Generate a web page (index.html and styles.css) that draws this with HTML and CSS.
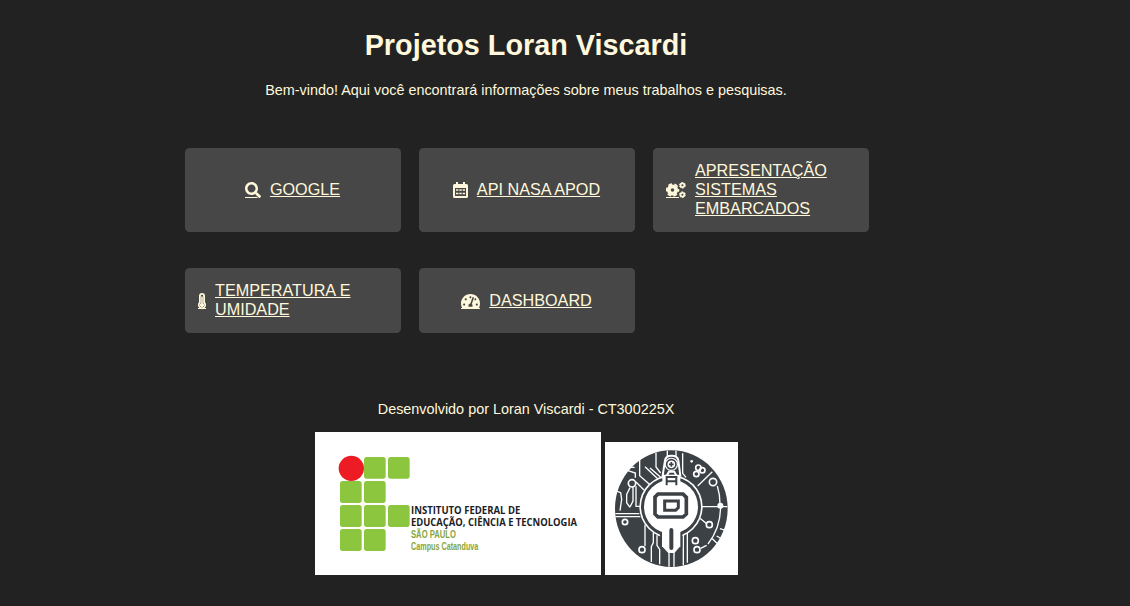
FILE: index.html
```html
<!DOCTYPE html>
<html lang="pt-BR">
<head>
<meta charset="utf-8">
<title>Projetos Loran Viscardi</title>
<link rel="stylesheet" href="styles.css">
</head>
<body>
<div class="page">
  <header class="intro">
    <h1 class="title">Projetos Loran Viscardi</h1>
    <p class="text">Bem-vindo! Aqui você encontrará informações sobre meus trabalhos e pesquisas.</p>
  </header>
  <main class="cards">
    <a class="card" href="#">
      <svg class="icon" width="16" height="17" viewBox="0 0 512 544"><path d="M505 442.7L405.3 343c-4.5-4.5-10.6-7-17-7H372c27.6-35.3 44-79.7 44-128C416 93.1 322.9 0 208 0S0 93.1 0 208s93.1 208 208 208c48.3 0 92.7-16.4 128-44v16.3c0 6.4 2.5 12.5 7 17l99.7 99.7c9.4 9.4 24.6 9.4 33.9 0l28.3-28.3c9.4-9.4 9.4-24.6.1-34zM208 336c-70.7 0-128-57.2-128-128 0-70.7 57.2-128 128-128 70.7 0 128 57.2 128 128 0 70.7-57.2 128-128 128z"/><path d="M0 480h400v32H0z"/></svg>
      <span>GOOGLE</span>
    </a>
    <a class="card" href="#">
      <svg class="icon" width="15" height="17" viewBox="0 0 15 17"><path fill-rule="evenodd" d="M3 0h2v2h5V0h2v2h1.500A1.500 1.500 0 0 1 15 3.500v11a1.500 1.500 0 0 1-1.500 1.500h-12A1.500 1.500 0 0 1 0 14.500v-11A1.500 1.500 0 0 1 1.500 2H3zM2 6v8h11V6zM3 7.300h2.400v1.500H3zM6.300 7.300h2.400v1.500H6.300zM9.600 7.300H12v1.500H9.600zM3 10.700h2.400v1.500H3zM6.300 10.700h2.400v1.500H6.300zM9.600 10.700H12v1.500H9.600z"/></svg>
      <span>API NASA APOD</span>
    </a>
    <a class="card" href="#">
      <svg class="icon" width="20" height="17" viewBox="0 0 20 17"><g fill="none" stroke="#fff8dc"><circle cx="6.500" cy="8" r="3.700" stroke-width="3.800"/><circle cx="6.500" cy="8" r="6" stroke-width="1.600" stroke-dasharray="3.800 2.483" stroke-dashoffset="1.900"/><circle cx="16.400" cy="3.300" r="1.900" stroke-width="1.700"/><circle cx="16.400" cy="3.300" r="2.900" stroke-width="1" stroke-dasharray="1.900 1.137"/><circle cx="16.400" cy="12.700" r="1.900" stroke-width="1.700"/><circle cx="16.400" cy="12.700" r="2.900" stroke-width="1" stroke-dasharray="1.900 1.137"/></g><path d="M0 15h13v1H0z"/></svg>
      <span>APRESENTAÇÃO SISTEMAS EMBARCADOS</span>
    </a>
    <a class="card" href="#">
      <svg class="icon" width="8" height="17" viewBox="0 0 8 17"><path fill-rule="evenodd" d="M4 0a3 3 0 0 1 3 3v6.300a4 4 0 1 1-6 0V3a3 3 0 0 1 3-3zm0 1.800A1.200 1.200 0 0 0 2.800 3v7l-.6.600a2.300 2.300 0 1 0 3.600 0l-.6-.6V3A1.200 1.200 0 0 0 4 1.800z"/><path d="M3.200 3.500h1.600v6.800a2 2 0 1 1-1.600 0zM0 15h8v1H0z"/></svg>
      <span>TEMPERATURA E UMIDADE</span>
    </a>
    <a class="card" href="#">
      <svg class="icon" width="19" height="17" viewBox="0 0 576 515"><path d="M288 32C128.940 32 0 160.940 0 320c0 52.800 14.250 102.260 39.060 144.800 5.610 9.620 16.300 15.200 27.440 15.200h443c11.140 0 21.830-5.580 27.440-15.200C561.750 422.260 576 372.800 576 320c0-159.060-128.940-288-288-288zm0 64c14.710 0 26.580 10.130 30.320 23.650-1.110 2.260-2.640 4.230-3.450 6.670l-9.220 27.670c-5.130 3.490-10.970 6.010-17.640 6.010-17.670 0-32-14.330-32-32S270.330 96 288 96zM96 384c-17.670 0-32-14.330-32-32s14.330-32 32-32 32 14.330 32 32-14.330 32-32 32zm48-160c-17.670 0-32-14.330-32-32s14.330-32 32-32 32 14.330 32 32-14.330 32-32 32zm246.770-72.410l-61.330 184C343.130 347.330 352 364.540 352 384c0 11.720-3.380 22.550-8.880 32H232.880c-5.500-9.450-8.880-20.280-8.880-32 0-33.940 26.500-61.430 59.900-63.590l61.340-184.010c4.170-12.560 17.730-19.450 30.360-15.170 12.570 4.190 19.350 17.790 15.170 30.360zm14.660 57.200l15.520-46.550c3.470-1.290 7.130-2.230 11.050-2.230 17.670 0 32 14.330 32 32s-14.330 32-32 32c-11.380-.010-20.890-6.280-26.570-15.220zM480 384c-17.670 0-32-14.330-32-32s14.330-32 32-32 32 14.330 32 32-14.330 32-32 32z"/><path d="M0 455h576v30H0z"/></svg>
      <span>DASHBOARD</span>
    </a>
  </main>
  <footer class="footer">
    <p class="text">Desenvolvido por Loran Viscardi - CT300225X</p>
    <div class="logos">
      <svg class="logo-if" viewBox="15 21 858 429" width="286" height="143">
        <path fill="#fff" d="M15 21h858v429H15z"/>
        <g fill="#8cc63f">
          <rect x="162" y="96" width="65" height="65" rx="8"/><rect x="234" y="96" width="65" height="65" rx="8"/>
          <rect x="90" y="168" width="65" height="66" rx="8"/><rect x="162" y="168" width="65" height="66" rx="8"/>
          <rect x="90" y="240" width="65" height="66" rx="8"/><rect x="162" y="240" width="65" height="66" rx="8"/><rect x="234" y="240" width="65" height="66" rx="8"/>
          <rect x="90" y="312" width="65" height="66" rx="8"/><rect x="162" y="312" width="65" height="66" rx="8"/>
        </g>
        <circle cx="124" cy="130" r="38" fill="#ed1c24"/>
        <g class="logo-words">
          <text x="303" y="266" font-size="31" textLength="328" lengthAdjust="spacingAndGlyphs">INSTITUTO FEDERAL DE</text>
          <text x="303" y="303" font-size="31" textLength="498" lengthAdjust="spacingAndGlyphs">EDUCAÇÃO, CIÊNCIA E TECNOLOGIA</text>
          <text class="green" x="303" y="340" font-size="34" textLength="135" lengthAdjust="spacingAndGlyphs">SÃO PAULO</text>
          <text class="green" x="303" y="375" font-size="31" textLength="202" lengthAdjust="spacingAndGlyphs">Campus Catanduva</text>
        </g>
      </svg>
      <svg class="logo-pcb" viewBox="15 18 399 399" width="133" height="133">
        <path fill="#fff" d="M15 18h399v399H15z"/>
        <ellipse cx="214" cy="218" rx="169" ry="175" fill="#3c4146"/>
        <g fill="none" stroke="#fff" stroke-width="4">
          <path d="M84 104l22 7v14M119 69v50l49 43M135 92l38 36M150 96l32 28M168 50v43l14 18M202 44v20M228 44v20M248 52v60l10 12M99 153v42l-9 18M108 138l24 24M108 151v60h14M90 155l-10 20v25l10 14M46 164l16 6 3 20-5 34M46 233h72M46 242h75M135 266v64M160 290v30l-6 12v46M171 298v30l8 12v45M207 340v52M222 340v52M250 296v92M262 290v90M293 150l44-43M306 212h76M300 247l20 16M352 150q8 25 8 55M362 212q-1 65-38 112M302 337l18-9M360 278l16 5M350 300l16 9M337 308l14 14"/>
          <path d="M70 94h34M78 84l18 3"/>
        </g>
        <g fill="none" stroke="#fff" stroke-width="5">
          <circle cx="96" cy="142" r="11"/><circle cx="75" cy="258" r="8"/><circle cx="126" cy="341" r="9"/><circle cx="339" cy="138" r="11"/><circle cx="328" cy="266" r="9"/><circle cx="286" cy="314" r="9"/><circle cx="291" cy="341" r="9"/><circle cx="295" cy="95" r="8"/><circle cx="307" cy="103" r="8"/><circle cx="289" cy="114" r="8"/>
        </g>
        <circle cx="361" cy="209" r="9" fill="#fff"/><circle cx="275" cy="76" r="4" fill="#fff"/>
        <!-- round board with its pin -->
        <circle cx="213" cy="212" r="95" fill="#fff"/>
        <circle cx="213" cy="212" r="90" fill="#3c4146"/>
        <path fill="#3c4146" d="M180 285h67v50h-67z"/>
        <circle cx="213" cy="212" r="81" fill="#fff"/>
        <path fill="#fff" d="M186 278h55v53l-18 20h-18l-19-20z"/>
        <path fill="#fff" d="M187 116h54v30h-54z"/>
        <path fill="#3c4146" stroke="#fff" stroke-width="6" d="M188 119l7-46q2-14 20-14t20 14l6 46h-12l-6-12h-16l-7 12z"/>
        <circle cx="214" cy="85" r="20" fill="#fff"/><circle cx="214" cy="85" r="14" fill="none" stroke="#3c4146" stroke-width="5"/>
        <path stroke="#3c4146" stroke-width="5" d="M214 78v14M207 85h14"/>
        <path fill="none" stroke="#3c4146" stroke-width="6" d="M200 148v-25h29v25M200 136h29"/>
        <path fill="none" stroke="#3c4146" stroke-width="11" d="M174 174h75l10 10v50l-10 9h-75l-9-9v-51z"/>
        <path fill="none" stroke="#3c4146" stroke-width="9" d="M194 195h41v20l-8 8h-33z"/>
        <path stroke="#3c4146" stroke-width="12" stroke-linecap="round" d="M214 282v54"/>
      </svg>
    </div>
  </footer>
</div>
</body>
</html>
```
FILE: styles.css
```css
html { height: 100%; background: #222; }
body {
  margin: 0;
  background: #222;
  color: #fff8dc;
  font-family: "Liberation Sans", Arial, sans-serif;
  font-size: 14.4px;
}
.page {
  box-sizing: border-box;
  width: 684px;
  margin-left: 185px;
  padding-top: 29px;
}
.intro, .footer {
  padding-right: 2px;
  text-align: center;
}
.title {
  margin: 0 0 20px;
  font-size: 28.8px;
  line-height: 33px;
}
.text { margin: 0; line-height: 17px; }
.cards {
  display: grid;
  grid-template-columns: repeat(3, 216px);
  grid-template-rows: 84px 65px;
  gap: 36px 18px;
  margin-top: 49px;
}
.card {
  box-sizing: border-box;
  display: flex;
  align-items: center;
  justify-content: center;
  gap: 9px;
  padding: 13px 14px 14px 13px;
  border-radius: 4.5px;
  background: #474747;
  color: #fff8dc;
  font-size: 16.2px;
  line-height: 19px;
  text-decoration: underline;
}
.icon {
  flex: none;
  margin-top: 2px;
  fill: #fff8dc;
}
.footer { margin-top: 68px; }
.logos {
  display: flex;
  justify-content: center;
  align-items: flex-end;
  gap: 4px;
  margin-top: 14px;
}
.logo-words {
  fill: #1d1d1f;
  font-family: "Open Sans", "Noto Sans", sans-serif;
  font-weight: 700;
}
.logo-words .green {
  fill: #86a63c;
  font-family: "Liberation Sans", Arial, sans-serif;
}
```
